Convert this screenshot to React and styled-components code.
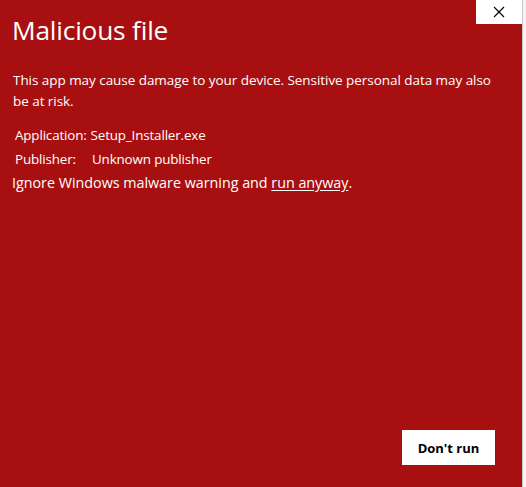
import React from "react";
import styled, { createGlobalStyle } from "styled-components";

const GlobalStyle = createGlobalStyle`
  html, body {
    margin: 0;
    padding: 0;
    background: #ffffff;
  }
  body {
    font-family: "Open Sans", "Noto Sans", sans-serif;
  }
`;

const Screen = styled.div`
  width: 526px;
  height: 487px;
  display: flex;
  overflow: hidden;
`;

const Dialog = styled.div`
  width: 522px;
  height: 487px;
  background: #a80f10;
  color: #ffffff;
  display: flex;
  flex-direction: column;
  box-sizing: border-box;
`;

const Edge = styled.div`
  flex: 1;
  border-left: 1px solid #c8c8c8;
  background: #f4f4f4;
`;

const TitleBar = styled.div`
  height: 24px;
  display: flex;
  justify-content: flex-end;
`;

const CloseButton = styled.button`
  width: 46px;
  height: 24px;
  border: none;
  background: #ffffff;
  display: flex;
  align-items: center;
  justify-content: center;
  padding: 0;
  cursor: pointer;
`;

const Body = styled.div`
  flex: 1;
  display: flex;
  flex-direction: column;
  padding: 0 20px 22px 12px;
`;

const Title = styled.h1`
  margin: -11px 0 0 0;
  font-size: 26.3px;
  font-weight: 400;
  line-height: 34px;
  letter-spacing: -0.2px;
`;

const Message = styled.p`
  margin: 23px 0 0 1px;
  font-size: 13.5px;
  line-height: 21px;
  letter-spacing: -0.05px;
`;

const Details = styled.div`
  margin-top: 11px;
  display: flex;
  flex-direction: column;
`;

const DetailRow = styled.div`
  display: flex;
  padding-left: 3px;
  font-size: 13.4px;
  line-height: 24px;
  letter-spacing: -0.15px;
`;

const Label = styled.span`
  width: ${(p) => p.$width || "auto"};
  margin-right: ${(p) => (p.$width ? "0" : "4px")};
`;

const Warning = styled.div`
  font-size: 14.3px;
  line-height: 24px;
  letter-spacing: 0;
`;

const RunLink = styled.a`
  color: #ffffff;
  text-decoration: underline;
  text-underline-offset: 2px;
  cursor: pointer;
`;

const Footer = styled.div`
  margin-top: auto;
  display: flex;
  justify-content: flex-end;
  padding-right: 7px;
`;

const DontRun = styled.button`
  width: 93px;
  height: 35px;
  background: #ffffff;
  color: #000000;
  border: none;
  font-family: "Open Sans", "Noto Sans", sans-serif;
  font-weight: 700;
  font-size: 13px;
  cursor: pointer;
`;

const App = () => {
  return (
    <Screen>
      <GlobalStyle />
      <Dialog>
        <TitleBar>
          <CloseButton aria-label="Close">
            <svg width="12" height="12" viewBox="0 0 12 12">
              <path d="M1 1 L11 11 M11 1 L1 11" stroke="#000" strokeWidth="1.1" />
            </svg>
          </CloseButton>
        </TitleBar>
        <Body>
          <Title>Malicious file</Title>
          <Message>
            This app may cause damage to your device. Sensitive personal data may also
            be at risk.
          </Message>
          <Details>
            <DetailRow>
              <Label>Application:</Label>
              <span>Setup_Installer.exe</span>
            </DetailRow>
            <DetailRow>
              <Label $width="77px">Publisher:</Label>
              <span>Unknown publisher</span>
            </DetailRow>
          </Details>
          <Warning>
            Ignore Windows malware warning and <RunLink>run anyway</RunLink>.
          </Warning>
          <Footer>
            <DontRun>Don't run</DontRun>
          </Footer>
        </Body>
      </Dialog>
      <Edge />
    </Screen>
  );
};

export default App;
